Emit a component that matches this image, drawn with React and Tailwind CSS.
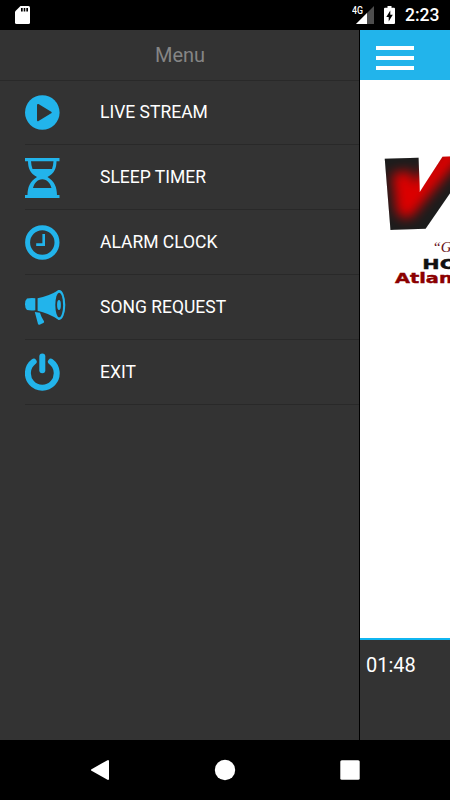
import React from "react";

function PlayIcon() {
  return (
    <svg width="35" height="35" viewBox="0 0 35 35" fill="#22b4eb">
      <circle cx="17.3" cy="17.5" r="17.3" />
      <path d="M13 9.9L25.7 17.5L13 25.2Z" fill="#333" stroke="#333" strokeWidth="2" strokeLinejoin="round" />
    </svg>
  );
}

function HourglassIcon() {
  return (
    <svg className="mt-px" width="35" height="40" viewBox="0 0 35 40" fill="#22b4eb">
      <path d="M0 0H34.5V3.2H0ZM0 37H34.5V40H0Z" />
      <path
        fillRule="evenodd"
        d="M3 3C3 10 5 15.5 12 19C5 23.5 2.5 29 2.5 37.5H32C32 29 29.5 23.5 22.5 19C29.5 15.5 31.5 10 31.5 3Z
          M6 3H28.5Q28.3 7.5 27 11H7.5Q6.2 7.5 6 3Z
          M17.3 21.2C12.5 21.2 9 25.5 8 30H26.5C25.5 25.5 22 21.2 17.3 21.2Z"
      />
    </svg>
  );
}

function ClockIcon() {
  return (
    <svg width="35" height="35" viewBox="0 0 35 35" fill="none" stroke="#22b4eb">
      <circle cx="17.3" cy="17.5" r="14.7" strokeWidth="5" />
      <path d="M18.7 9V19.6H11.2" strokeWidth="2.6" />
    </svg>
  );
}

function MegaphoneIcon() {
  return (
    <svg className="mt-0.5" width="41" height="36" viewBox="0 0 41 36" fill="#22b4eb">
      <path d="M2 8.5Q5.5 7.8 10.3 8.2V20.3Q5.5 20.8 2 20Q0 18.5 0 14.3T2 8.5Z" />
      <path d="M12.6 8.2Q23 6.5 34 0V30Q23 23 12.6 20.8Z" />
      <ellipse cx="34.3" cy="15" rx="6" ry="15" />
      <ellipse cx="34.2" cy="15" rx="3.9" ry="12.3" fill="#333" />
      <ellipse cx="34" cy="15" rx="1.9" ry="5" />
      <path d="M9.8 22L15 22.7Q15.8 26 19 31.2Q19.6 32.5 18.3 33L14.5 34.7Q13.3 35 13 34Z" />
    </svg>
  );
}

function PowerIcon() {
  return (
    <svg width="35" height="38" viewBox="0 0 35 38" fill="none" stroke="#22b4eb" strokeWidth="6" strokeLinecap="round">
      <path d="M17.3 3.6V17.3" />
      <path d="M8.7 8.7A14.4 14.4 0 1 0 25.9 8.7" />
    </svg>
  );
}

const items = [
  { label: "LIVE STREAM", Icon: PlayIcon },
  { label: "SLEEP TIMER", Icon: HourglassIcon },
  { label: "ALARM CLOCK", Icon: ClockIcon },
  { label: "SONG REQUEST", Icon: MegaphoneIcon },
  { label: "EXIT", Icon: PowerIcon },
];

function StatusBar() {
  return (
    <div className="flex h-[30px] shrink-0 items-center bg-black text-white">
      <svg className="ml-[15px]" width="15" height="18" viewBox="0 0 15 18">
        <path d="M5.5 0H13.5Q15 0 15 1.5V16.5Q15 18 13.5 18H1.5Q0 18 0 16.5V5.5Z" fill="#fff" />
        <path d="M6 2H7.7V5.5H6ZM8.7 2H10.3V5.5H8.7ZM11.3 2H13V5.5H11.3Z" fill="#000" />
      </svg>
      <svg className="ml-auto" width="23" height="18" viewBox="0 0 23 18">
        <path d="M22 0V18H4Z" fill="#4d4d4d" />
        <path d="M15 7V18H4Z" fill="#fff" />
        <text x="0" y="7.6" fontSize="10" fontWeight="500" fill="#fff" textLength="11" lengthAdjust="spacingAndGlyphs" fontFamily="Roboto, sans-serif">
          4G
        </text>
      </svg>
      <svg className="ml-[9px]" width="11" height="18" viewBox="0 0 11 18">
        <path d="M3.5 0H7.5V1.8H10Q11 1.8 11 2.8V17Q11 18 10 18H1Q0 18 0 17V2.8Q0 1.8 1 1.8H3.5Z" fill="#fff" />
        <path d="M6.3 4.5V8.8H8.8L4.7 15.5V11H2.3Z" fill="#000" />
      </svg>
      <span className="mt-0.5 mr-[10.5px] ml-[10px] text-[17.5px] leading-none font-medium">2:23</span>
    </div>
  );
}

function Drawer() {
  return (
    <div className="w-[360px] shrink-0 border-r border-black bg-[#333]">
      <div className="flex h-[50px] items-center justify-center shadow-[0_1px_0_#292929]">
        <h1 className="pl-px text-[20px] text-[#858585]">Menu</h1>
      </div>

      {items.map(({ label, Icon }) => (
        <div key={label} className="ml-[25px] flex h-[65px] items-center border-b border-[#292929]">
          <div className="w-[75px]">
            <Icon />
          </div>
          <span className="pt-0.5 text-[17.5px] leading-none text-white">{label}</span>
        </div>
      ))}
    </div>
  );
}

const letterShape = {
  transform: "matrix(1.12 -0.04 -0.3 0.95 8 76.5)",
  fontFamily: "Inter, sans-serif",
  fontWeight: 900,
  fontSize: 92,
};

function StationLogo() {
  return (
    <svg width="90" height="140" viewBox="0 0 90 140">
      <defs>
        <filter id="soft" x="-50%" y="-50%" width="200%" height="200%">
          <feGaussianBlur stdDeviation="6" />
        </filter>
        <mask id="letter" maskUnits="userSpaceOnUse" x="0" y="0" width="120" height="100">
          <text {...letterShape} fill="#fff" stroke="#fff" strokeWidth="9">
            V
          </text>
        </mask>
      </defs>
      <g mask="url(#letter)">
        <rect width="120" height="100" fill="#1c1c1c" />
        <path d="M42 22L46 58L98 -4" fill="none" stroke="#dc0000" strokeWidth="20" strokeLinejoin="round" filter="url(#soft)" />
      </g>
      <text x="72.5" y="101.5" fontFamily="Liberation Serif, serif" fontStyle="italic" fontSize="15" fill="#681014">
        “Gu
      </text>
      <text x="62.3" y="118.5" fontFamily="DejaVu Sans, sans-serif" fontWeight="700" fontSize="14.5" fill="#111" stroke="#111" strokeWidth="0.4" textLength="35" lengthAdjust="spacingAndGlyphs">
        HO
      </text>
      <text x="35" y="133" fontFamily="DejaVu Sans, sans-serif" fontWeight="700" fontSize="14" fill="#8b0000" stroke="#8b0000" strokeWidth="0.4" textLength="80" lengthAdjust="spacingAndGlyphs">
        Atlanta
      </text>
    </svg>
  );
}

function Player() {
  return (
    <div className="flex w-[90px] shrink-0 flex-col bg-[#333]">
      <div className="h-[50px] bg-[#22b4eb] pt-4 pl-4">
        <div className="flex w-[38px] flex-col gap-[6px]">
          <div className="h-1 bg-white"></div>
          <div className="h-1 bg-white"></div>
          <div className="h-1 bg-white"></div>
        </div>
      </div>

      <div className="h-[560px] border-b-2 border-[#10b5f0] bg-white pt-[70px]">
        <StationLogo />
      </div>

      <div className="pt-[10px] pl-[6px] text-[20px] text-white">01:48</div>
    </div>
  );
}

function NavBar() {
  return (
    <div className="h-[60px] shrink-0 bg-black">
      <svg width="450" height="60" viewBox="0 0 450 60" fill="#fff">
        <path d="M92 30L108 21V39Z" stroke="#fff" strokeWidth="2" strokeLinejoin="round" />
        <circle cx="225" cy="30" r="10.2" />
        <rect x="340.3" y="20.3" width="19.4" height="19.4" rx="1.5" />
      </svg>
    </div>
  );
}

export default function App() {
  return (
    <div className="flex h-[800px] w-[450px] flex-col overflow-hidden bg-black font-['Roboto',sans-serif]">
      <StatusBar />
      <div className="flex flex-1">
        <Drawer />
        <Player />
      </div>
      <NavBar />
    </div>
  );
}
